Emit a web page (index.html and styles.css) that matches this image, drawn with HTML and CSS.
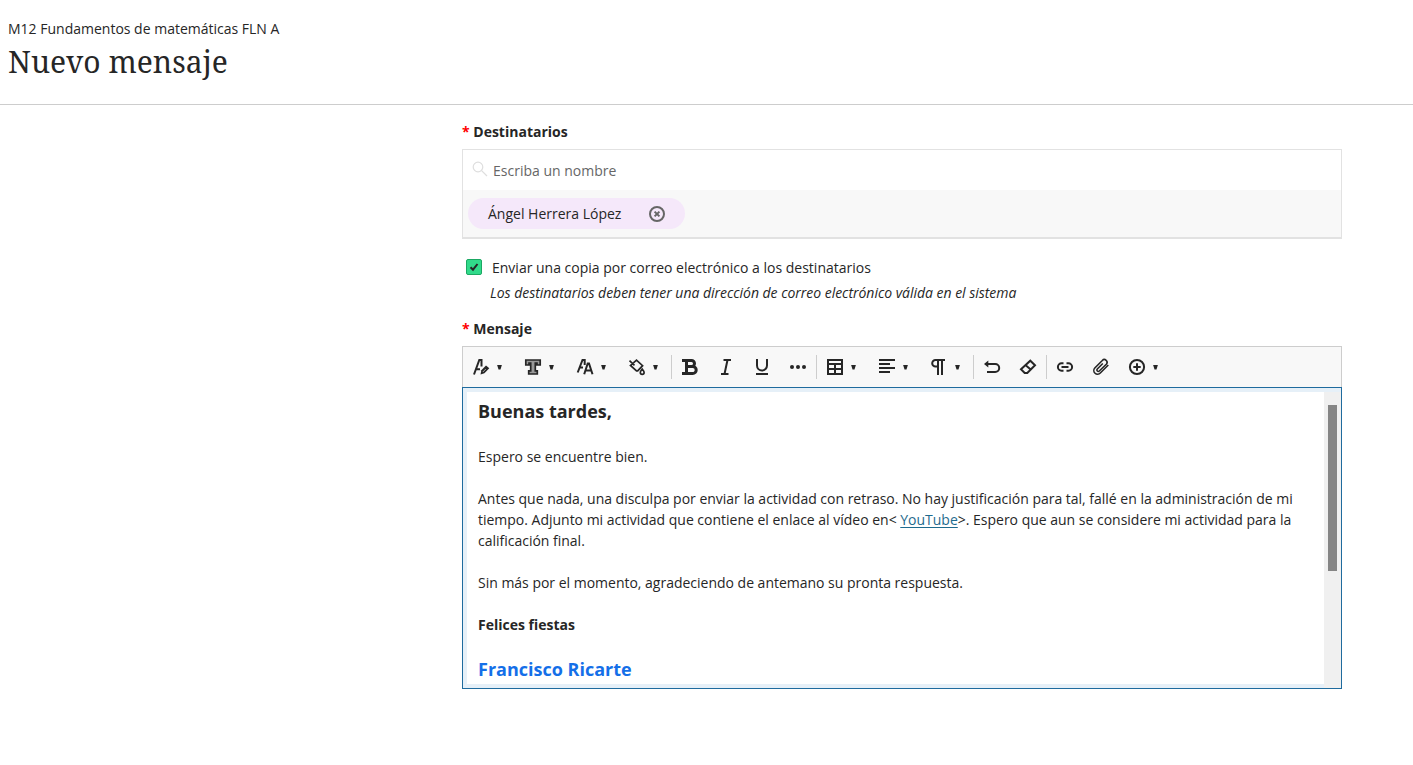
FILE: index.html
```html
<!DOCTYPE html>
<html lang="es">
<head>
<meta charset="utf-8">
<title>Nuevo mensaje</title>
<link rel="stylesheet" href="styles.css">
</head>
<body>
<header class="page-header">
  <div class="course">M12 Fundamentos de matemáticas FLN A</div>
  <h1 class="title">Nuevo mensaje</h1>
</header>
<main class="form">
  <label class="label"><span class="req">*</span> Destinatarios</label>
  <section class="recipients">
    <div class="search">
      <svg class="search-icon" width="16" height="16" viewBox="0 0 16 16"><circle cx="6" cy="6" r="4.8"/><path d="M9.6 9.6 15 15"/></svg>
      <span>Escriba un nombre</span>
    </div>
    <div class="chips">
      <div class="chip"><span>Ángel Herrera López</span>
        <svg width="16" height="16" viewBox="0 0 16 16"><circle cx="8" cy="8" r="7"/><path d="M5.6 5.6l4.8 4.8M10.4 5.6l-4.8 4.8"/></svg>
      </div>
    </div>
  </section>
  <div class="check-row">
    <span class="checkbox"><svg width="10" height="10" viewBox="0 0 10 10"><path d="M1.500 5.200 4 7.700 8.500 2"/></svg></span>
    <span>Enviar una copia por correo electrónico a los destinatarios</span>
  </div>
  <p class="hint">Los destinatarios deben tener una dirección de correo electrónico válida en el sistema</p>
  <label class="label label-message"><span class="req">*</span> Mensaje</label>
  <section class="editor">
    <div class="toolbar">
      <span class="tool drop"><svg viewBox="0 0 16 16"><path d="M1 15.500 6.300 1H8.500V7.500M3 10.300H7"/><path class="fill" d="M7.500 15.500l.8-4.300 4.700-4.700 3.300 2.700-4.900 5z"/><path class="light" d="M9.800 13l3-3"/></svg><i></i></span>
      <span class="tool drop"><svg viewBox="0 0 16 16"><path class="grey" d="M.8 1h14.400v5h-3.200V4.200H10.300v7.600h2v3.200H3.700v-3.200h2V4.200H4V6H.8z"/></svg><i></i></span>
      <span class="tool drop"><svg viewBox="0 0 16 16"><path d="M.7 13.500 5.500 1H7.700V6M2.300 8.500H6M7.200 15.300 10.700 4.500H12L15.500 15.300M8.700 11.500h5.500"/></svg><i></i></span>
      <span class="tool drop"><svg viewBox="0 0 16 16"><path class="thin" d="M.5 1.700 5.500 6.300M4.700 3.700 7.500 1.200 13.600 6.700 8.700 11.800H7.500L1.500 6.500 4.700 3.700"/><path class="thin" d="M13.200 10c-1.200 1.500-1.900 2.500-1.900 3.500a1.900 1.900 0 0 0 3.800 0c0-1-.7-2-1.900-3.500z"/></svg><i></i></span>
      <b class="sep"></b>
      <span class="tool"><svg viewBox="0 0 16 16"><path class="bold" d="M0 1.500h9.500a3 3 0 0 1 0 6H5M9.500 7.500h1.200a3.400 3.400 0 0 1 0 7H0M4.500 1.500v13"/></svg></span>
      <span class="tool"><svg viewBox="0 0 16 16"><path d="M5.500 1h7.500M3 15h7.500M9.500 1 6.500 15"/></svg></span>
      <span class="tool"><svg viewBox="0 0 16 16"><path d="M3 0v6.500a5 5 0 0 0 10 0V0M2 15h12"/></svg></span>
      <span class="tool"><svg viewBox="0 0 16 16"><g class="fill"><circle cx="2" cy="8" r="2"/><circle cx="8" cy="8" r="2"/><circle cx="14" cy="8" r="2"/></g></svg></span>
      <b class="sep"></b>
      <span class="tool drop"><svg viewBox="0 0 16 16"><path d="M1 1h14v14H1zM1 5h14M1 10h14M8 5v10"/></svg><i></i></span>
      <span class="tool drop"><svg viewBox="0 0 16 16"><path d="M0 1h16M0 5h11M0 9h16M0 13h11"/></svg><i></i></span>
      <span class="tool drop"><svg viewBox="0 0 16 16"><path d="M14 1H4.500a3.300 3.300 0 0 0 0 6.600H7M7 1v15M11 1v15"/></svg><i></i></span>
      <b class="sep"></b>
      <span class="tool"><svg viewBox="0 0 16 16"><path d="M1.500 5H11.200a4 4 0 0 1 0 8H3"/><path class="fill" d="M4.300 1.500 0 5 4.300 8.500z"/></svg></span>
      <span class="tool"><svg viewBox="0 0 16 16"><path d="M1 10.300 10.300 1.700 15 6.200 7.300 14H4.700zM5.700 6.200l5 4.300"/></svg></span>
      <b class="sep"></b>
      <span class="tool"><svg viewBox="0 0 16 16"><path d="M6.500 4.300H4.600a3.700 3.700 0 0 0 0 7.400H6.500M9.500 4.300h1.900a3.700 3.700 0 0 1 0 7.400H9.500M4.500 8h7"/></svg></span>
      <span class="tool"><svg viewBox="0 0 16 16"><path class="clip" d="M15.300 6 7.300 14a3.700 3.700 0 0 1-5.500-5L9.300 1.500a2.700 2.700 0 0 1 4 3.700L6.300 12a1.400 1.400 0 0 1-2-2L9.800 4.500"/></svg></span>
      <span class="tool drop"><svg viewBox="0 0 16 16"><circle cx="8" cy="8" r="7.100"/><path d="M8 4.300v7.400M4.300 8h7.400"/></svg><i></i></span>
    </div>
    <div class="frame">
      <div class="content">
        <p class="greeting">Buenas tardes,</p>
        <p>Espero se encuentre bien.</p>
        <p class="body-text">Antes que nada, una disculpa por enviar la actividad con retraso. No hay justificación para tal, fallé en la administración de mi<br>tiempo. Adjunto mi actividad que contiene el enlace al vídeo en&lt; <a class="link">YouTube</a>&gt;. Espero que aun se considere mi actividad para la<br>calificación final.</p>
        <p class="body-text">Sin más por el momento, agradeciendo de antemano su pronta respuesta.</p>
        <p class="strong">Felices fiestas</p>
        <p class="signature">Francisco Ricarte</p>
      </div>
      <div class="scroll"><div class="thumb"></div></div>
    </div>
  </section>
</main>
</body>
</html>
```
FILE: styles.css
```css
* { box-sizing: border-box; }
body {
  margin: 0;
  background: #fff;
  color: #262626;
  font: 14px/21px "Open Sans", sans-serif;
}
.page-header {
  height: 105px;
  padding: 18px 8px 0;
  border-bottom: 1px solid #cdcdcd;
}
.title {
  margin: 3px 0 0;
  font: 400 30px/40px "Noto Serif", "DejaVu Serif", serif;
}
.form { width: 880px; margin-left: 462px; }
.label { display: block; padding-top: 16px; height: 44px; font-weight: 700; }
.req { color: #f00; }
.recipients {
  height: 90px;
  border: 1px solid #e2e2e2;
  border-bottom-width: 2px;
}
.search {
  height: 40px;
  padding-left: 9px;
  display: flex;
  align-items: center;
  gap: 5px;
  color: #666;
}
.search-icon { fill: none; stroke: #dedede; stroke-width: 1.2; margin-top: -3px; }
.chips { height: 47px; padding: 8px 5px; background: #f8f8f8; }
.chip {
  width: 217px;
  height: 31px;
  padding: 0 20px;
  border-radius: 16px;
  background: #f5e8fa;
  display: flex;
  align-items: center;
  justify-content: space-between;
}
.chip svg { fill: none; stroke: #666; stroke-width: 2; }
.check-row { display: flex; align-items: center; gap: 10px; padding: 18px 0 0 4px; }
.checkbox {
  width: 16px;
  height: 16px;
  margin-bottom: 2px;
  border: 1px solid #1ba863;
  border-radius: 2px;
  background: #31da8a;
  display: grid;
  place-items: center;
}
.checkbox svg { fill: none; stroke: #262626; stroke-width: 2; }
.hint { margin: 4px 0 0 28px; font-style: italic; letter-spacing: -0.03px; }
.label-message { padding-top: 15px; height: 43px; }
.toolbar {
  height: 41px;
  display: flex;
  align-items: center;
  background: #f8f8f8;
  border: 1px solid #cdcdcd;
  border-bottom: 0;
}
.tool { width: 36px; padding-left: 10px; display: flex; align-items: center; gap: 7px; }
.drop { width: 52px; }
.tool svg {
  width: 16px;
  height: 16px;
  flex: none;
  overflow: visible;
  fill: none;
  stroke: #262626;
  stroke-width: 2;
}
.tool svg .fill { fill: #262626; stroke: none; }
.tool svg .light { stroke: #aaa; stroke-width: 1; }
.tool svg .grey { fill: #999; stroke-width: 1.7; }
.tool svg .bold { stroke-width: 3; }
.tool svg .thin { stroke-width: 1.7; }
.tool svg .clip { stroke-width: 1.6; }
.tool i {
  width: 5px;
  height: 5px;
  margin-left: 1px;
  background: #262626;
  clip-path: polygon(0 0, 100% 0, 70% 100%, 30% 100%);
}
.sep { width: 1px; height: 24px; background: #cdcdcd; }
.frame {
  height: 302px;
  padding: 4px 0 4px 4px;
  border: 1px solid #1f6b9e;
  background: #e6f0f8;
  display: flex;
}
.content {
  width: 857px;
  height: 292px;
  padding: 9px 0 0 11px;
  background: #fff;
  overflow: hidden;
  white-space: nowrap;
}
.content p { margin: 0 0 21px; }
.content .greeting { font-size: 18px; line-height: 21px; font-weight: 700; margin-bottom: 24px; }
.body-text { letter-spacing: -0.01px; }
.strong { font-weight: 700; }
.content .signature { color: #146fe8; font-size: 18px; line-height: 27px; font-weight: 700; }
.link {
  color: #1f6b8e;
  text-decoration: underline;
  text-decoration-thickness: 1px;
  text-decoration-skip-ink: none;
  text-underline-offset: 2px;
}
.scroll { width: 17px; height: 296px; background: #f0f0f0; padding: 13px 4px 0; }
.thumb { height: 166px; background: #858585; }
```
